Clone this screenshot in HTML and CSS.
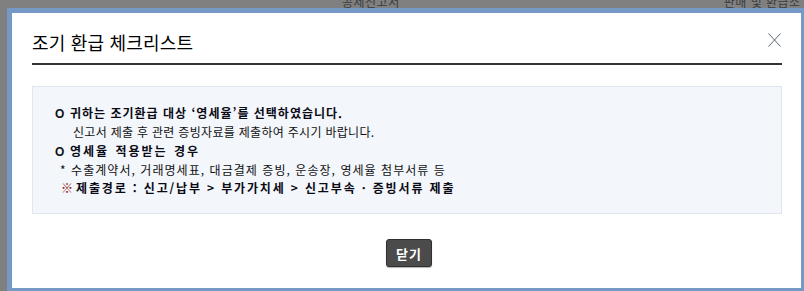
FILE: index.html
```html
<!DOCTYPE html>
<html lang="ko">
<head>
<meta charset="utf-8">
<title>조기 환급 체크리스트</title>
<link rel="stylesheet" href="styles.css">
</head>
<body>
<div class="page">
  <div class="page-head">
    <span class="ph-center">공제신고서</span>
    <span class="ph-right">판매 및 환급소</span>
  </div>
</div>
<div class="modal">
  <div class="modal-head">
    <h1 class="modal-title">조기 환급 체크리스트</h1>
    <button class="close" aria-label="닫기">
      <svg width="13" height="14" viewBox="0 0 13 14"><path d="M0.5 0.5 L12.5 13.5 M12.5 0.5 L0.5 13.5" stroke="#5a6470" stroke-width="1" fill="none"/></svg>
    </button>
  </div>
  <div class="info">
    <p class="b l1"><span class="mark">O</span>귀하는 조기환급 대상 ‘영세율’를 선택하였습니다.</p>
    <p class="sub">신고서 제출 후 관련 증빙자료를 제출하여 주시기 바랍니다.</p>
    <p class="b l3"><span class="mark">O</span>영세율 적용받는 경우</p>
    <p class="star">* 수출계약서, 거래명세표, 대금결제 증빙, 운송장, 영세율 첨부서류 등</p>
    <p class="b path"><span class="ref">※</span>제출경로 : 신고/납부 &gt; 부가가치세 &gt; 신고부속 · 증빙서류 제출</p>
  </div>
  <div class="actions">
    <button class="btn">닫기</button>
  </div>
</div>
</body>
</html>
```
FILE: styles.css
```css
html, body {
  margin: 0;
  padding: 0;
  width: 804px;
  height: 291px;
  overflow: hidden;
  background: #808080;
  font-family: "Noto Sans CJK KR", "Noto Sans", sans-serif;
}
.page {
  height: 291px;
}
.page-head {
  display: flex;
  height: 8px;
  overflow: hidden;
  font-size: 12px;
  line-height: 12px;
  color: #3c3c3c;
  white-space: nowrap;
}
.ph-center {
  flex: none;
  margin-left: 342px;
  margin-top: -4px;
  letter-spacing: 0.5px;
}
.ph-right {
  flex: none;
  margin-left: 324px;
  margin-top: -4px;
  letter-spacing: 0.5px;
}
.modal {
  position: absolute;
  left: 7px;
  top: 8px;
  width: 750px;
  height: 275px;
  border: 5px solid #7599c4;
  background: #fff;
  padding: 0 19px 0 20px;
  box-sizing: content-box;
}
.modal-head {
  position: relative;
  padding: 17px 0 9px;
  border-bottom: 2px solid #333;
}
.modal-title {
  margin: 0;
  font-size: 18px;
  line-height: 24px;
  font-weight: normal;
  color: #000;
  letter-spacing: 0.2px;
}
.close {
  position: absolute;
  right: 1px;
  top: 20px;
  width: 13px;
  height: 14px;
  padding: 0;
  border: 0;
  background: none;
  display: block;
}
.close svg {
  display: block;
}
.info {
  margin-top: 21px;
  background: #f3f6fb;
  border: 1px solid #dfe6ef;
  padding: 17px 20px 16px 22px;
  font-size: 12px;
  line-height: 18.3px;
  color: #111;
}
.info p {
  margin: 0;
  white-space: nowrap;
}
.b {
  font-weight: bold;
  color: #0a0a14;
}
.l1 {
  letter-spacing: 1px;
}
.l3 {
  letter-spacing: 2px;
  word-spacing: 1px;
}
.mark {
  display: inline-block;
  font-family: "Liberation Sans", sans-serif;
  font-weight: bold;
  font-size: 12px;
  width: 15px;
  letter-spacing: 0;
  color: #111;
}
.sub {
  padding-left: 18px;
  letter-spacing: 0.3px;
}
.star {
  padding-left: 5px;
  letter-spacing: 1.05px;
}
.path {
  padding-left: 6px;
  letter-spacing: 1.85px;
}
.ref {
  display: inline-block;
  color: #8a0a0a;
  width: 15px;
  letter-spacing: 0;
  font-weight: bold;
}
.actions {
  display: flex;
  justify-content: center;
  padding-top: 25px;
}
.btn {
  width: 46px;
  height: 28px;
  margin-left: 4px;
  padding: 0;
  background: #4b4b4b;
  border: 1px solid #2f2f2f;
  border-radius: 3px;
  color: #fff;
  font-family: "Noto Sans CJK KR", sans-serif;
  font-size: 13px;
  font-weight: bold;
  letter-spacing: 1px;
  box-shadow: 0 1px 1px rgba(0,0,0,0.3);
}
```
